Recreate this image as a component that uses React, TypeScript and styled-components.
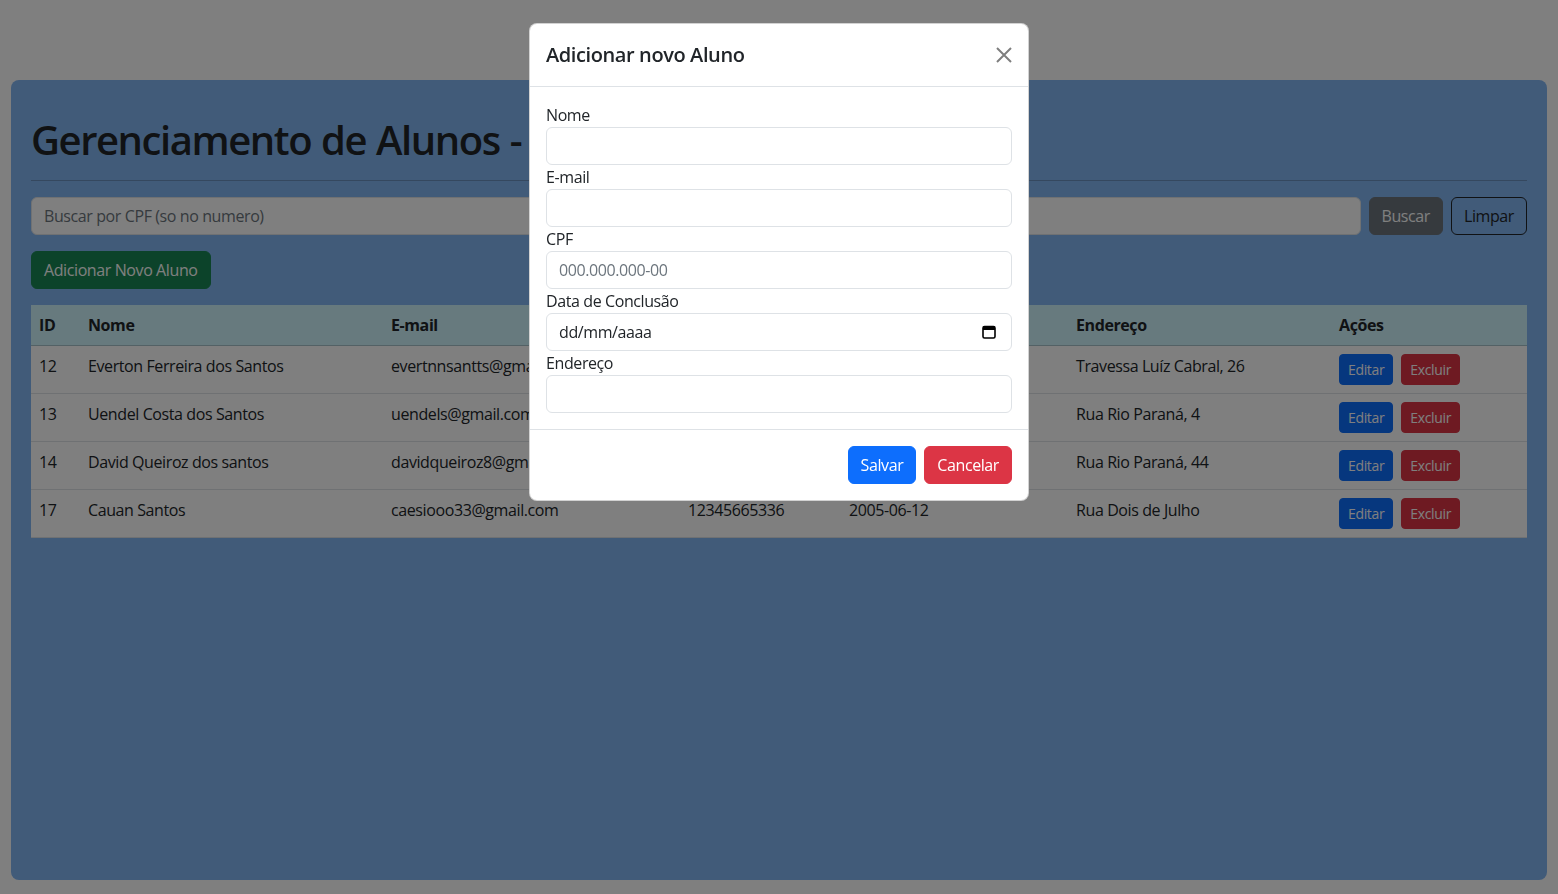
import React from "react";
import styled, { createGlobalStyle } from "styled-components";

const GlobalStyle = createGlobalStyle`
  * { box-sizing: border-box; }
  html, body { margin: 0; padding: 0; background: #ffffff; }
  body {
    font-family: "Segoe UI", "Open Sans", "Noto Sans", sans-serif;
    font-size: 16px;
    line-height: 1.5;
    letter-spacing: -0.025em;
    color: #212529;
  }
  input, button { letter-spacing: -0.025em; }
`;

const Page = styled.div`
  padding: 80px 11px 14px;
`;

const Container = styled.main`
  height: 800px;
  background: #83b6f2;
  border-radius: 8px;
  padding: 20px 20px;
`;

const Title = styled.h1`
  margin: 16px 0 7px;
  font-size: 40px;
  font-weight: 600;
  line-height: 1.2;
  letter-spacing: -0.036em;
  word-spacing: 1px;
  color: #212529;
`;

const Rule = styled.hr`
  margin: 16px 0;
  border: 0;
  border-top: 1px solid #212529;
  opacity: 0.25;
`;

const SearchRow = styled.div`
  display: flex;
  gap: 8px;
`;

const Input = styled.input<{ $dark?: boolean }>`
  display: block;
  width: 100%;
  height: 38px;
  padding: 6px 12px;
  font: inherit;
  font-size: 16px;
  line-height: 24px;
  color: #212529;
  background: #fff;
  border: 1px solid #dee2e6;
  border-radius: 6px;
  outline: none;
  &::placeholder {
    color: ${(p) => (p.$dark ? "#212529" : "#6c757d")};
    opacity: 1;
  }
`;

const SearchInput = styled(Input)`
  flex: 1;
`;

const Button = styled.button<{ $variant: string; $small?: boolean }>`
  font: inherit;
  font-size: ${(p) => (p.$small ? "14px" : "16px")};
  line-height: ${(p) => (p.$small ? "21px" : "24px")};
  padding: ${(p) => (p.$small ? "4px 8px" : "6px 12px")};
  border-radius: ${(p) => (p.$small ? "4px" : "6px")};
  white-space: nowrap;
  cursor: pointer;
  border: 1px solid
    ${(p) =>
      ({
        primary: "#0d6efd",
        danger: "#dc3545",
        success: "#198754",
        secondary: "#6c757d",
        outlineDark: "#212529",
      } as Record<string, string>)[p.$variant]};
  background: ${(p) =>
    ({
      primary: "#0d6efd",
      danger: "#dc3545",
      success: "#198754",
      secondary: "#6c757d",
      outlineDark: "transparent",
    } as Record<string, string>)[p.$variant]};
  color: ${(p) => (p.$variant === "outlineDark" ? "#212529" : "#fff")};
`;

const AddRow = styled.div`
  margin-top: 16px;
`;

const Table = styled.table`
  margin-top: 16px;
  width: 100%;
  border-collapse: collapse;
  table-layout: fixed;
  background: #fff;
`;

const HeadCell = styled.th<{ $w: number }>`
  width: ${(p) => p.$w}px;
  text-align: left;
  font-weight: 700;
  padding: 8px;
  background: #cff4fc;
  border-bottom: 1px solid #a6c3ca;
  vertical-align: bottom;
`;

const Cell = styled.td`
  padding: 8px;
  border-bottom: 1px solid #dee2e6;
  vertical-align: top;
  white-space: nowrap;
  overflow: hidden;
`;

const Actions = styled.div`
  display: flex;
  gap: 8px;
`;

const Backdrop = styled.div`
  position: fixed;
  inset: 0;
  background: rgba(0, 0, 0, 0.5);
  z-index: 1040;
`;

const ModalWrap = styled.div`
  position: fixed;
  inset: 0;
  z-index: 1050;
  padding-top: 23px;
`;

const Dialog = styled.div`
  width: 500px;
  margin: 0 auto;
  background: #fff;
  border: 1px solid rgba(0, 0, 0, 0.175);
  border-radius: 8px;
`;

const ModalHeader = styled.div`
  display: flex;
  align-items: center;
  padding: 16px;
  border-bottom: 1px solid #dee2e6;
`;

const ModalTitle = styled.h5`
  margin: 0;
  font-size: 20px;
  font-weight: 600;
  line-height: 30px;
  flex: 1;
`;

const CloseButton = styled.button`
  width: 32px;
  height: 32px;
  padding: 8px;
  margin: -8px -8px -8px auto;
  border: 0;
  background: transparent;
  opacity: 0.5;
  display: flex;
  align-items: center;
  justify-content: center;
`;

const ModalBody = styled.div`
  padding: 16px;
`;

const Label = styled.label`
  display: block;
  font-size: 16px;
  line-height: 24px;
`;

const DateField = styled.div`
  position: relative;
`;

const CalendarIcon = styled.svg`
  position: absolute;
  right: 16px;
  top: 12px;
`;

const ModalFooter = styled.div`
  display: flex;
  justify-content: flex-end;
  gap: 8px;
  padding: 12px 16px;
  border-top: 1px solid #dee2e6;
  & > button {
    margin: 4px 0;
  }
`;

const columns = [
  { label: "ID", w: 49 },
  { label: "Nome", w: 303 },
  { label: "E-mail", w: 297 },
  { label: "CPF", w: 161 },
  { label: "Data de Conclusão", w: 227 },
  { label: "Endereço", w: 263 },
  { label: "Ações", w: 196 },
];

const alunos = [
  { id: 12, nome: "Everton Ferreira dos Santos", email: "evertnnsantts@gmail.com", cpf: "12345678910", data: "2023-12-15", end: "Travessa Luíz Cabral, 26" },
  { id: 13, nome: "Uendel Costa dos Santos", email: "uendels@gmail.com", cpf: "98765432100", data: "2022-07-20", end: "Rua Rio Paraná, 4" },
  { id: 14, nome: "David Queiroz dos santos", email: "davidqueiroz8@gmail.com", cpf: "45678912300", data: "2024-01-10", end: "Rua Rio Paraná, 44" },
  { id: 17, nome: "Cauan Santos", email: "caesiooo33@gmail.com", cpf: "12345665336", data: "2005-06-12", end: "Rua Dois de Julho" },
];

export default function App() {
  return (
    <>
      <GlobalStyle />
      <Page>
        <Container>
          <Title>Gerenciamento de Alunos - Escola</Title>
          <Rule />
          <SearchRow>
            <SearchInput placeholder="Buscar por CPF (so no numero)" />
            <Button $variant="secondary">Buscar</Button>
            <Button $variant="outlineDark">Limpar</Button>
          </SearchRow>
          <AddRow>
            <Button $variant="success">Adicionar Novo Aluno</Button>
          </AddRow>
          <Table>
            <thead>
              <tr>
                {columns.map((c) => (
                  <HeadCell key={c.label} $w={c.w}>
                    {c.label}
                  </HeadCell>
                ))}
              </tr>
            </thead>
            <tbody>
              {alunos.map((a) => (
                <tr key={a.id}>
                  <Cell>{a.id}</Cell>
                  <Cell>{a.nome}</Cell>
                  <Cell>{a.email}</Cell>
                  <Cell>{a.cpf}</Cell>
                  <Cell>{a.data}</Cell>
                  <Cell>{a.end}</Cell>
                  <Cell>
                    <Actions>
                      <Button $variant="primary" $small>
                        Editar
                      </Button>
                      <Button $variant="danger" $small>
                        Excluir
                      </Button>
                    </Actions>
                  </Cell>
                </tr>
              ))}
            </tbody>
          </Table>
        </Container>
      </Page>
      <Backdrop />
      <ModalWrap>
        <Dialog>
          <ModalHeader>
            <ModalTitle>Adicionar novo Aluno</ModalTitle>
            <CloseButton aria-label="Fechar">
              <svg width="16" height="16" viewBox="0 0 16 16">
                <path d="M1 1 L15 15 M15 1 L1 15" stroke="#000" strokeWidth="2" />
              </svg>
            </CloseButton>
          </ModalHeader>
          <ModalBody>
            <Label>Nome</Label>
            <Input />
            <Label>E-mail</Label>
            <Input />
            <Label>CPF</Label>
            <Input placeholder="000.000.000-00" />
            <Label>Data de Conclusão</Label>
            <DateField>
              <Input placeholder="dd/mm/aaaa" $dark />
              <CalendarIcon width="14" height="14" viewBox="0 0 14 14">
                <rect x="1" y="1.5" width="12" height="11.5" rx="1.5" fill="none" stroke="#000" strokeWidth="1.6" />
                <rect x="1" y="1.5" width="12" height="3.5" fill="#000" />
              </CalendarIcon>
            </DateField>
            <Label>Endereço</Label>
            <Input />
          </ModalBody>
          <ModalFooter>
            <Button $variant="primary">Salvar</Button>
            <Button $variant="danger">Cancelar</Button>
          </ModalFooter>
        </Dialog>
      </ModalWrap>
    </>
  );
}
